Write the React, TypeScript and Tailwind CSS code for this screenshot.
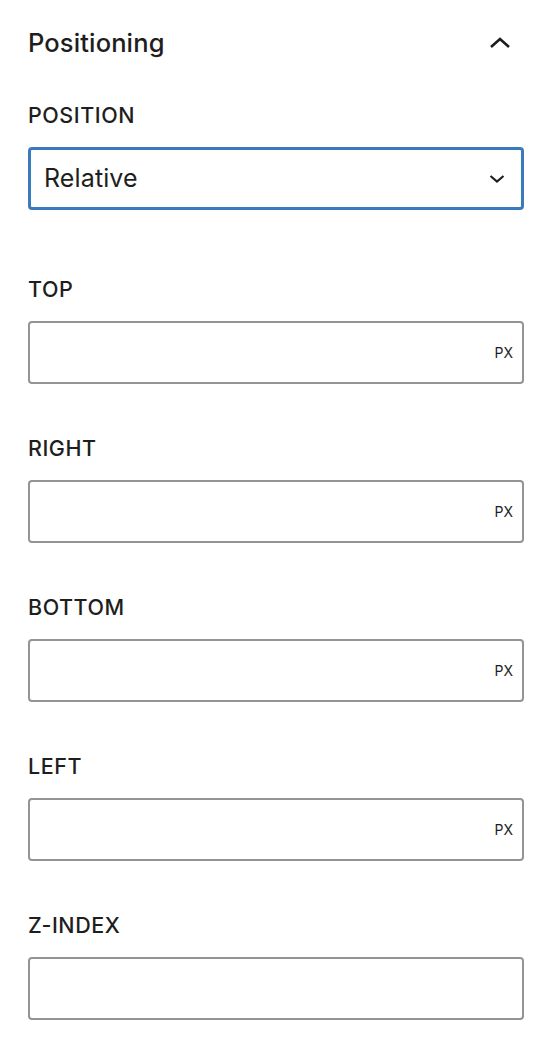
const fields = [
  { label: "TOP", unit: "PX" },
  { label: "RIGHT", unit: "PX" },
  { label: "BOTTOM", unit: "PX" },
  { label: "LEFT", unit: "PX" },
  { label: "Z-INDEX", unit: "" },
];

function ChevronUp() {
  return (
    <svg width="26" height="26" viewBox="0 0 26 26" className="text-[#1e1e1e]">
      <path d="M4 17 L13 9 L22 17" fill="none" stroke="currentColor" strokeWidth="2.6" />
    </svg>
  );
}

function ChevronDown() {
  return (
    <svg width="18" height="18" viewBox="0 0 18 18" className="text-[#1e1e1e]">
      <path d="M2.5 6 L9 11.5 L15.5 6" fill="none" stroke="currentColor" strokeWidth="2.2" />
    </svg>
  );
}

export default function App() {
  return (
    <main className="min-h-screen bg-white pl-[28px] pr-[26px] pt-[28px] font-['Inter',sans-serif] text-[#1e1e1e]">
      <div className="flex h-[30px] items-center justify-between">
        <h2 className="text-[25.5px] font-medium leading-[30px] tracking-[0.005em]">Positioning</h2>
        <div className="mr-[11px]">
          <ChevronUp />
        </div>
      </div>

      <div className="mt-[45px]">
        <div className="text-[21.5px] font-medium leading-[24px] tracking-[0.025em]">POSITION</div>
        <div className="mt-[20px] flex h-[63px] items-center justify-between rounded-[4px] border-[3px] border-[#3a7bbd] pl-[13px] pr-[15px]">
          <span className="text-[25px] leading-none tracking-[0.005em]">Relative</span>
          <ChevronDown />
        </div>
      </div>

      <div className="mt-[67px] flex flex-col gap-[52px]">
        {fields.map((f) => (
          <div key={f.label}>
            <div className="text-[21.5px] font-medium leading-[24px] tracking-[0.025em]">{f.label}</div>
            <div className="mt-[20px] flex h-[63px] items-center justify-end rounded-[4px] border-2 border-[#949494] pr-[9px]">
              <span className="text-[14px] leading-none">{f.unit}</span>
            </div>
          </div>
        ))}
      </div>
    </main>
  );
}
